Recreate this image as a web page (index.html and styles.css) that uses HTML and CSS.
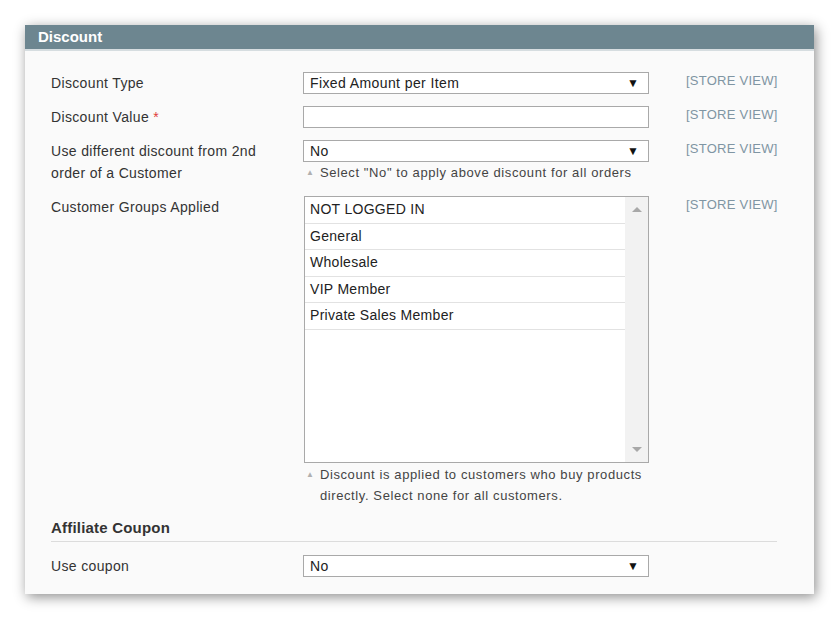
FILE: index.html
```html
<!DOCTYPE html>
<html>
<head>
<meta charset="utf-8">
<link rel="stylesheet" href="styles.css">
</head>
<body>
<div class="page">
  <div class="panel">
    <div class="panel-head">Discount</div>
    <div class="panel-body">
      <div class="row">
        <div class="label">Discount Type</div>
        <div class="control">
          <div class="select"><span>Fixed Amount per Item</span><span class="caret">&#9660;</span></div>
        </div>
        <div class="scope">[STORE VIEW]</div>
      </div>
      <div class="row">
        <div class="label">Discount Value <span class="req">*</span></div>
        <div class="control">
          <div class="input"></div>
        </div>
        <div class="scope">[STORE VIEW]</div>
      </div>
      <div class="row">
        <div class="label">Use different discount from 2nd order of a Customer</div>
        <div class="control">
          <div class="select"><span>No</span><span class="caret">&#9660;</span></div>
          <div class="note"><span class="tri">&#9650;</span><span>Select "No" to apply above discount for all orders</span></div>
        </div>
        <div class="scope">[STORE VIEW]</div>
      </div>
      <div class="row row-groups">
        <div class="label">Customer Groups Applied</div>
        <div class="control">
          <div class="listbox">
            <div class="options">
              <div class="opt">NOT LOGGED IN</div>
              <div class="opt">General</div>
              <div class="opt">Wholesale</div>
              <div class="opt">VIP Member</div>
              <div class="opt">Private Sales Member</div>
            </div>
            <div class="scrollbar"><span class="sb-up"></span><span class="sb-down"></span></div>
          </div>
          <div class="note note-2"><span class="tri">&#9650;</span><span>Discount is applied to customers who buy products directly. Select none for all customers.</span></div>
        </div>
        <div class="scope">[STORE VIEW]</div>
      </div>
      <div class="subhead">Affiliate Coupon</div>
      <div class="row row-last">
        <div class="label">Use coupon</div>
        <div class="control">
          <div class="select"><span>No</span><span class="caret">&#9660;</span></div>
        </div>
        <div class="scope"></div>
      </div>
    </div>
  </div>
</div>
</body>
</html>
```

FILE: styles.css
```css
* { box-sizing: border-box; }
html, body { margin: 0; padding: 0; background: #ffffff; }
body { font-family: "Liberation Sans", Arial, sans-serif; color: #333; }

.page { padding: 25px; width: 839px; height: 619px; }

.panel {
  width: 789px;
  height: 569px;
  background: #fafafa;
  box-shadow: 2px 3px 12px rgba(0,0,0,0.45);
}

.panel-head {
  height: 26px;
  background: #6d8690;
  color: #fff;
  font-weight: bold;
  font-size: 15px;
  line-height: 24px;
  padding-left: 13px;
  border-bottom: 2px solid #d6dde0;
}

.panel-body { padding: 21px 0 0 26px; }

.row {
  display: grid;
  grid-template-columns: 252px 346px 1fr;
  margin-bottom: 12px;
}

.label {
  font-size: 14px;
  letter-spacing: 0.35px;
  line-height: 22px;
  color: #333;
  padding-right: 30px;
}
.req { color: #e03a3a; }

.select, .input {
  height: 22px;
  border: 1px solid #a9a9a9;
  background: #fff;
  font-size: 14px;
  letter-spacing: 0.4px;
  line-height: 20px;
  padding: 0 9px 0 6px;
  display: flex;
  justify-content: space-between;
  color: #222;
}
.caret { font-size: 12px; color: #111; letter-spacing: 0; }

.scope {
  font-size: 13px;
  letter-spacing: 0.25px;
  color: #7f95a3;
  line-height: 18px;
  padding-left: 37px;
  white-space: nowrap;
}

.note {
  display: flex;
  gap: 6px;
  font-size: 13px;
  letter-spacing: 0.6px;
  line-height: 21px;
  color: #444;
  padding-left: 3px;
  padding-right: 0;
}
.tri { font-size: 8px; color: #b0b0b0; line-height: 21px; flex: none; letter-spacing: 0; }
.note-2 { margin-top: 1px; }

.row-groups { margin-top: 9px; }

.listbox {
  height: 267px;
  border: 1px solid #a9a9a9;
  background: #fff;
  display: flex;
  margin-left: 1px;
}
.options { flex: 1; }
.opt {
  height: 26.5px;
  line-height: 25px;
  border-bottom: 1px solid #e2e2e2;
  font-size: 14px;
  letter-spacing: 0.3px;
  padding-left: 5px;
  color: #222;
}
.scrollbar {
  width: 23px;
  background: #f2f2f2;
  position: relative;
}
.sb-up, .sb-down {
  position: absolute;
  left: 7px;
  width: 0; height: 0;
  border-left: 5px solid transparent;
  border-right: 5px solid transparent;
}
.sb-up { top: 10px; border-bottom: 5px solid #a8a8a8; }
.sb-down { bottom: 10px; border-top: 5px solid #a8a8a8; }

.subhead {
  margin-top: 8px;
  font-size: 15px;
  letter-spacing: 0.2px;
  font-weight: bold;
  color: #333;
  line-height: 20px;
  padding-bottom: 3px;
  border-bottom: 1px solid #dcdcdc;
  width: 726px;
  margin-bottom: 13px;
}

.row-last { margin-bottom: 0; }
```
